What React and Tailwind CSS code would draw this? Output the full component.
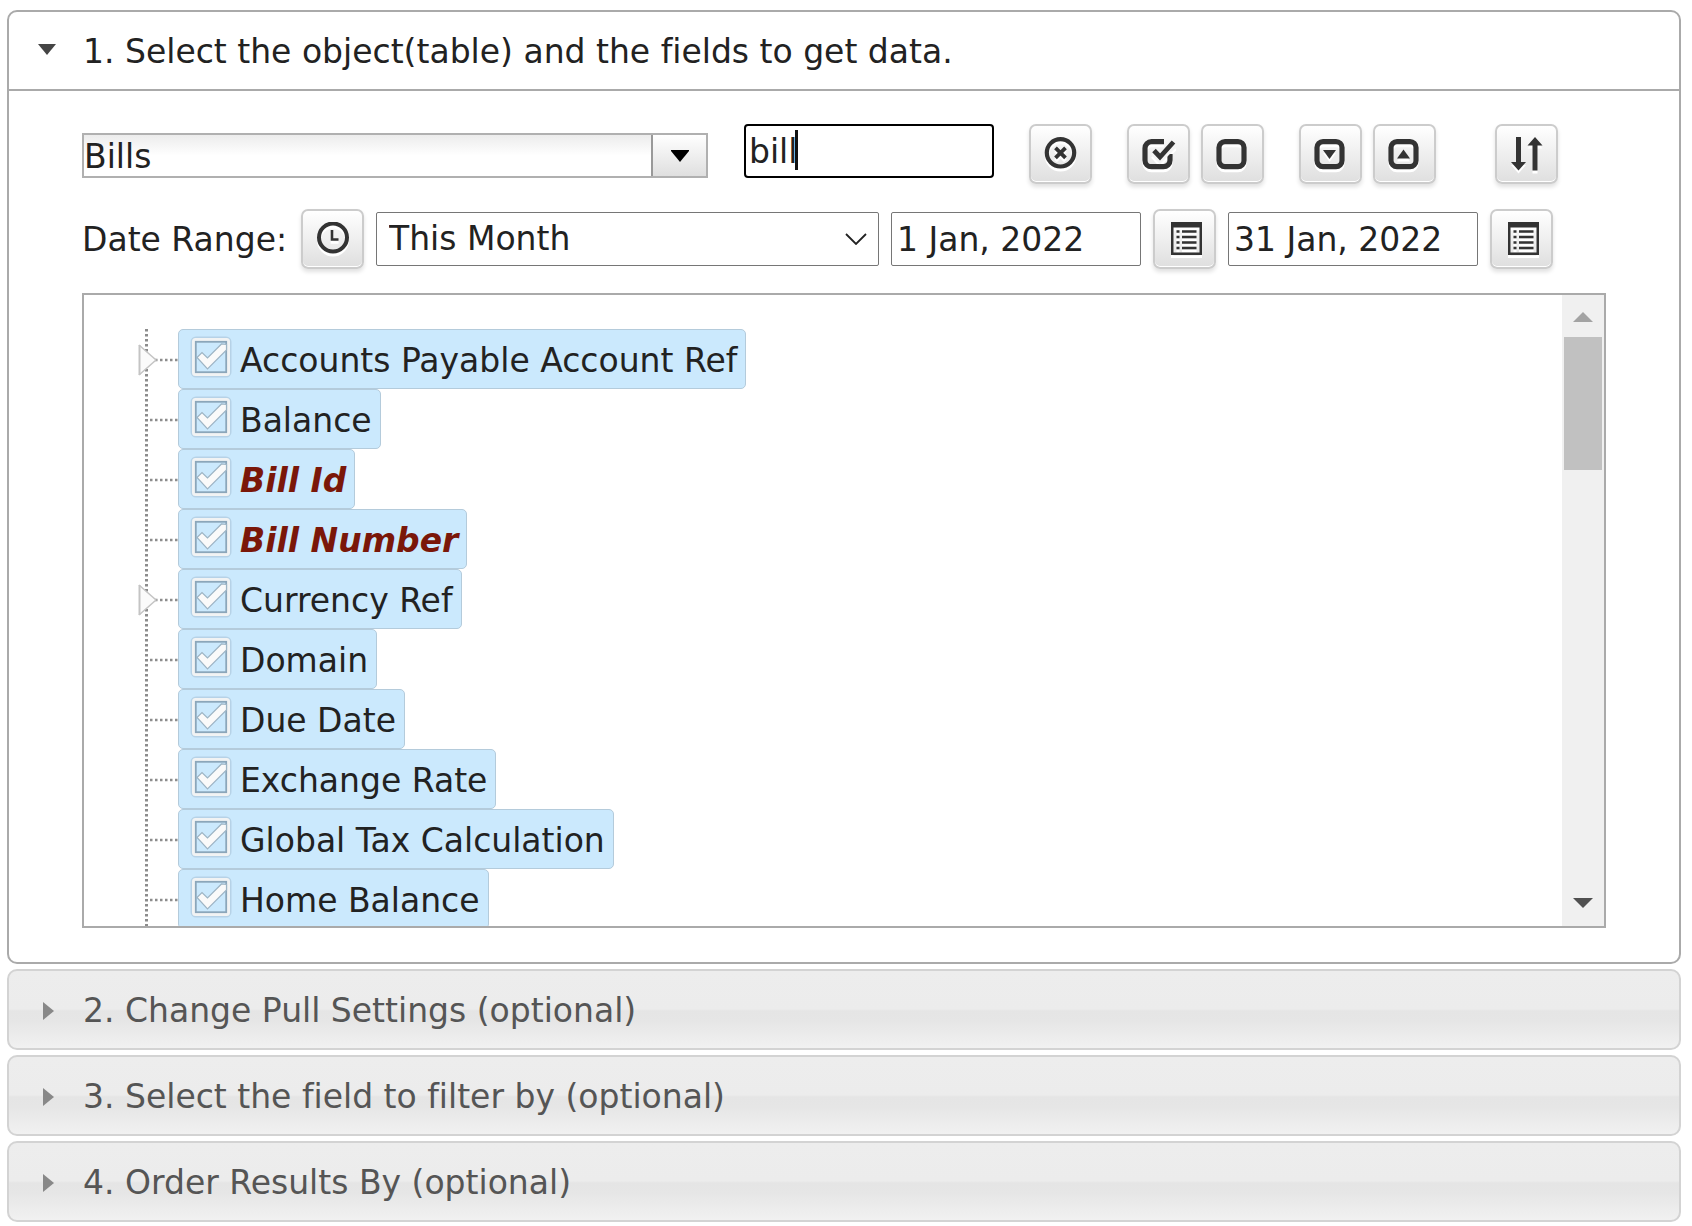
import { useState } from "react";

const FIELDS = [
  { name: "Accounts Payable Account Ref", expandable: true },
  { name: "Balance" },
  { name: "Bill Id", required: true },
  { name: "Bill Number", required: true },
  { name: "Currency Ref", expandable: true },
  { name: "Domain" },
  { name: "Due Date" },
  { name: "Exchange Rate" },
  { name: "Global Tax Calculation" },
  { name: "Home Balance" },
];

const SECTIONS = [
  "2. Change Pull Settings (optional)",
  "3. Select the field to filter by (optional)",
  "4. Order Results By (optional)",
];

const Icon = ({ children }) => (
  <svg
    viewBox="0 0 34 34"
    className="w-[34px] h-[34px] drop-shadow-[0_3px_0_#ffffff]"
    fill="none"
    stroke="#333333"
    aria-hidden="true"
  >
    {children}
  </svg>
);

const ClearIcon = () => (
  <Icon>
    <circle cx="16.5" cy="15.8" r="13.7" strokeWidth="4.2" />
    <path d="M11.500 10.800l10 10M21.500 10.800l-10 10" strokeWidth="3.8" />
  </Icon>
);

const CheckAllIcon = () => (
  <Icon>
    <path
      d="M22 4.700H9.500A6.500 6.500 0 0 0 3 11.200v12a6.500 6.500 0 0 0 6.500 6.500h12a6.500 6.500 0 0 0 6.500-6.500V17"
      strokeWidth="5.2"
    />
    <path d="M12 15l6 6.500L32 7" stroke="#f4f4f4" strokeWidth="8" />
    <path d="M12 13.500l6 6.500L31.500 5" strokeWidth="4.8" />
  </Icon>
);

const BoxIcon = ({ children }) => (
  <Icon>
    <rect x="3" y="4.6" width="25" height="25" rx="6" strokeWidth="5.2" />
    {children}
  </Icon>
);

const SortIcon = () => (
  <Icon>
    <path d="M6 0h5v25h5l-7.500 8.500L1 25h5z" fill="#333333" stroke="none" />
    <path d="M22.500 33.500v-25h-5l7.500-8.500 7.500 8.500h-5v25z" fill="#333333" stroke="none" />
  </Icon>
);

const ClockIcon = () => (
  <Icon>
    <circle cx="17" cy="15.5" r="14" strokeWidth="4" />
    <path d="M16 8v9.500h6.500" strokeWidth="2.6" />
  </Icon>
);

const ListIcon = () => (
  <Icon>
    <path d="M3 0h31v33H3zM5.500 5.500v25h26v-25z" fill="#333333" fillRule="evenodd" stroke="none" />
    <path
      d="M8.500 9.500h3M8.500 15h3M8.500 20.500h3M8.500 26h3M14 9.500h14.500M14 15h14.500M14 20.500h14.500M14 26h14.500"
      strokeWidth="2.6"
    />
  </Icon>
);

const ToolButton = ({ label, children, onClick }) => (
  <button
    type="button"
    title={label}
    aria-label={label}
    onClick={onClick}
    className="w-[63px] h-[60px] shrink-0 flex items-center justify-center rounded-[7px] border-2 border-[#cccccc] bg-linear-to-b from-white to-[#dfdfdf] shadow-[0_3px_4px_rgba(0,0,0,0.12),inset_0_-1px_0_#ffffff]"
  >
    {children}
  </button>
);

const CheckMark = ({ checked }) => (
  <svg
    viewBox="0 0 42 42"
    className="col-start-1 row-start-1 w-[42px] h-[42px] pointer-events-none"
    fill="none"
    aria-hidden="true"
  >
    <rect x="2" y="2" width="38" height="38" rx="4" stroke="#8faabd" strokeOpacity="0.35" strokeWidth="3" />
    <rect x="3.500" y="3.500" width="35" height="35" rx="2" stroke="#f1f3f4" strokeWidth="3" />
    <rect x="5.800" y="5.800" width="30.400" height="30.400" stroke="#8ba6ba" strokeWidth="1.800" />
    {checked && (
      <path
        d="M7 21.500l5-5 5.500 5.500L31.500 8l5 .5v5.500L17.500 33z"
        fill="#fafafa"
        stroke="#9db4c4"
        strokeWidth="1.2"
      />
    )}
  </svg>
);

const FieldRow = ({ field, checked, onToggle }) => (
  <li className="h-[60px] flex">
    <svg viewBox="0 0 42 60" className="w-[42px] h-[60px] shrink-0" fill="none" aria-hidden="true">
      <path d="M10.500 0v60" stroke="#8c8c8c" strokeWidth="3" strokeDasharray="2.5 2.5" />
      <path d="M14 31h28" stroke="#8c8c8c" strokeWidth="2.5" strokeDasharray="2.5 2.5" />
      {field.expandable && (
        <>
          <path d="M3 16v30l17-15z" fill="#fbfbfb" />
          <path d="M3.500 16v30" stroke="#c4c4c4" strokeWidth="2" />
          <path d="M3 16l17 15L3 46" stroke="#c4c4c4" strokeWidth="1.5" />
        </>
      )}
    </svg>
    <label className="flex items-center h-[60px] pt-1 pl-[11px] pr-2 border border-[#b4cbdb] rounded-[5px] bg-[#cbe9fd]">
      <span className="grid pb-2">
        <input
          type="checkbox"
          checked={checked}
          onChange={onToggle}
          className="col-start-1 row-start-1 w-[42px] h-[42px] appearance-none"
        />
        <CheckMark checked={checked} />
      </span>
      <span
        className={
          field.required
            ? "ml-2 whitespace-nowrap font-bold italic text-[#7a1709]"
            : "ml-2 whitespace-nowrap"
        }
      >
        {field.name}
      </span>
    </label>
  </li>
);

const App = () => {
  const [open, setOpen] = useState(true);
  const [table, setTable] = useState("Bills");
  const [search, setSearch] = useState("bill");
  const [from, setFrom] = useState("1 Jan, 2022");
  const [to, setTo] = useState("31 Jan, 2022");
  const [unchecked, setUnchecked] = useState([]);

  const toggle = (name) => {
    setUnchecked((prev) =>
      prev.includes(name) ? prev.filter((n) => n !== name) : [...prev, name]
    );
  };

  return (
    <main className="pt-2.5 pl-[7px] pr-[11px] flex flex-col gap-[5px] bg-white text-[#222222] text-[33px] leading-10 font-['Verdana','DejaVu_Sans',sans-serif] [font-variant-ligatures:none]">
      <section className="border-2 border-[#aaaaaa] rounded-[10px]">
        <h3>
          <button
            type="button"
            aria-expanded={open}
            onClick={() => setOpen(!open)}
            className="w-full h-[79px] pt-0.5 flex items-center text-left border-b-2 border-[#aaaaaa]"
          >
            <span className="w-[74px] shrink-0 pl-[29px] pb-1">
              <svg viewBox="0 0 18 11" className="w-[18px] h-[11px]" aria-hidden="true">
                <path d="M0 0h18L9 11z" fill="#454545" />
              </svg>
            </span>
            1. Select the object(table) and the fields to get data.
          </button>
        </h3>

        {open && (
          <div className="px-[73px] pt-[33px] pb-[34px]">
            <div className="flex items-start gap-[35px]">
              <div className="flex items-end gap-9">
                <div className="w-[626px] h-[45px] flex border-2 border-[#b0b0b0] bg-linear-to-b from-[#ececec] to-white to-50%">
                  <input
                    aria-label="Object"
                    value={table}
                    onChange={(e) => setTable(e.target.value)}
                    className="flex-1 min-w-0 pt-0.5 outline-none"
                  />
                  <button
                    type="button"
                    aria-label="Show objects"
                    className="w-[55px] flex items-center justify-center border-l-2 border-[#999999] bg-linear-to-b from-white to-[#dfdfdf]"
                  >
                    <svg viewBox="0 0 18 12" className="w-[18px] h-3" aria-hidden="true">
                      <path d="M0 0h18v1L9 12 0 1z" fill="#000000" />
                    </svg>
                  </button>
                </div>
                <div className="relative">
                  <input
                    aria-label="Search fields"
                    value={search}
                    onChange={(e) => setSearch(e.target.value)}
                    className="w-[250px] h-[54px] pl-[3px] block border-2 border-black rounded-[4px] outline-none caret-transparent"
                  />
                  <span className="absolute left-[51px] top-[6px] w-[3px] h-10 bg-[#111111]" />
                </div>
              </div>

              <ToolButton label="Clear search" onClick={() => setSearch("")}>
                <ClearIcon />
              </ToolButton>
              <div className="flex gap-[11px]">
                <ToolButton label="Select all" onClick={() => setUnchecked([])}>
                  <CheckAllIcon />
                </ToolButton>
                <ToolButton label="Select none" onClick={() => setUnchecked(FIELDS.map((f) => f.name))}>
                  <BoxIcon />
                </ToolButton>
              </div>
              <div className="flex gap-[11px]">
                <ToolButton label="Expand all">
                  <BoxIcon>
                    <path d="M9 13h13l-6.500 9z" fill="#333333" stroke="none" />
                  </BoxIcon>
                </ToolButton>
                <ToolButton label="Collapse all">
                  <BoxIcon>
                    <path d="M9 21.500h13l-6.500-9z" fill="#333333" stroke="none" />
                  </BoxIcon>
                </ToolButton>
              </div>
              <div className="pl-6">
                <ToolButton label="Sort">
                  <SortIcon />
                </ToolButton>
              </div>
            </div>

            <div className="mt-[25px] flex items-center gap-3">
              <label htmlFor="range" className="w-[207px] pt-0.5 whitespace-nowrap">
                Date Range:
              </label>
              <ToolButton label="Recent ranges">
                <ClockIcon />
              </ToolButton>
              <div className="grid items-center">
                <select
                  id="range"
                  className="col-start-1 row-start-1 w-[503px] h-[54px] pl-3 appearance-none border border-[#767676] rounded-[2px] bg-white"
                >
                  <option>This Month</option>
                  <option>Last Month</option>
                  <option>This Year</option>
                </select>
                <svg
                  viewBox="0 0 22 12"
                  className="col-start-1 row-start-1 justify-self-end mr-3 w-[22px] h-3 pointer-events-none"
                  fill="none"
                  aria-hidden="true"
                >
                  <path d="M1 1l10 10L21 1" stroke="#222222" strokeWidth="1.8" />
                </svg>
              </div>
              <input
                aria-label="From"
                value={from}
                onChange={(e) => setFrom(e.target.value)}
                className="w-[250px] h-[54px] pl-[5px] border border-[#767676] rounded-[2px]"
              />
              <ToolButton label="Pick start date">
                <ListIcon />
              </ToolButton>
              <input
                aria-label="To"
                value={to}
                onChange={(e) => setTo(e.target.value)}
                className="w-[250px] h-[54px] pl-[5px] border border-[#767676] rounded-[2px]"
              />
              <ToolButton label="Pick end date">
                <ListIcon />
              </ToolButton>
            </div>

            <div className="mt-6 h-[635px] flex border-2 border-[#aaaaaa]">
              <ul className="flex-1 pt-[34px] pl-[52px] overflow-hidden">
                {FIELDS.map((field) => (
                  <FieldRow
                    key={field.name}
                    field={field}
                    checked={!unchecked.includes(field.name)}
                    onToggle={() => toggle(field.name)}
                  />
                ))}
              </ul>
              <div className="w-[42px] pt-[17px] pb-[18px] flex flex-col items-center bg-[#f0f0f0]">
                <svg viewBox="0 0 20 10" className="w-5 h-2.5" aria-hidden="true">
                  <path d="M0 10h20L10 0z" fill="#a3a3a3" />
                </svg>
                <div className="mt-[15px] w-[38px] h-[133px] bg-[#c1c1c1]" />
                <svg viewBox="0 0 20 10" className="mt-auto w-5 h-2.5" aria-hidden="true">
                  <path d="M0 0h20L10 10z" fill="#505050" />
                </svg>
              </div>
            </div>
          </div>
        )}
      </section>

      {SECTIONS.map((title) => (
        <h3 key={title}>
          <button
            type="button"
            aria-expanded="false"
            className="w-full h-[81px] pt-0.5 flex items-center text-left text-[#555555] border-2 border-[#d3d3d3] rounded-[10px] bg-[linear-gradient(#ededed,#ececec_49%,#e5e5e5_52%,#e6e6e6_65%,#f1f1f1)]"
          >
            <span className="w-[74px] shrink-0 pl-[34px]">
              <svg viewBox="0 0 11 18" className="w-[11px] h-[18px]" aria-hidden="true">
                <path d="M0 0v18l11-9z" fill="#888888" />
              </svg>
            </span>
            {title}
          </button>
        </h3>
      ))}
    </main>
  );
};

export default App;
